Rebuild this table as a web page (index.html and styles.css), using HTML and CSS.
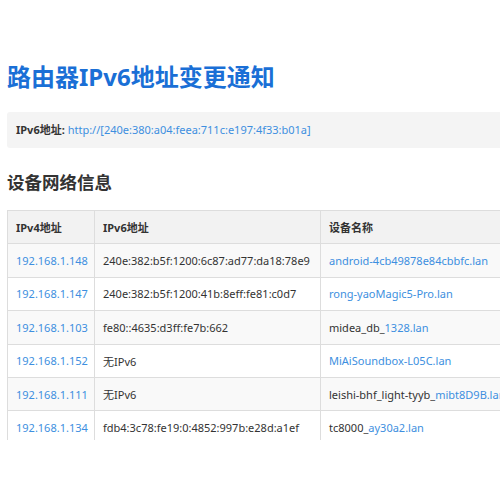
FILE: index.html
```html
<!DOCTYPE html>
<html lang="zh-CN">
<head>
<meta charset="utf-8">
<link rel="stylesheet" href="styles.css">
</head>
<body>
<div class="page">
    <h1 class="title">路由器IPv6地址变更通知</h1>
    <div class="addr_box">
        <b>IPv6地址:</b> <a href="#">http://[240e:380:a04:feea:711c:e197:4f33:b01a]</a>
    </div>
    <h2 class="sub_title">设备网络信息</h2>
    <table class="dev_table">
        <tr>
            <th class="c1">IPv4地址</th>
            <th class="c2">IPv6地址</th>
            <th class="c3">设备名称</th>
        </tr>
        <tr>
            <td><a href="#">192.168.1.148</a></td>
            <td>240e:382:b5f:1200:6c87:ad77:da18:78e9</td>
            <td><a href="#">android-4cb49878e84cbbfc.lan</a></td>
        </tr>
        <tr>
            <td><a href="#">192.168.1.147</a></td>
            <td>240e:382:b5f:1200:41b:8eff:fe81:c0d7</td>
            <td><a href="#">rong-yaoMagic5-Pro.lan</a></td>
        </tr>
        <tr>
            <td><a href="#">192.168.1.103</a></td>
            <td>fe80::4635:d3ff:fe7b:662</td>
            <td>midea_db_<a href="#">1328.lan</a></td>
        </tr>
        <tr>
            <td><a href="#">192.168.1.152</a></td>
            <td>无IPv6</td>
            <td><a href="#">MiAiSoundbox-L05C.lan</a></td>
        </tr>
        <tr>
            <td><a href="#">192.168.1.111</a></td>
            <td>无IPv6</td>
            <td>leishi-bhf_light-tyyb_<a href="#">mibt8D9B.lan</a></td>
        </tr>
        <tr>
            <td><a href="#">192.168.1.134</a></td>
            <td>fdb4:3c78:fe19:0:4852:997b:e28d:a1ef</td>
            <td>tc8000_<a href="#">ay30a2.lan</a></td>
        </tr>
    </table>
</div>
</body>
</html>
```
FILE: styles.css
```css
html, body {margin:0; padding:0; background:#fff; overflow:hidden;}
body {font-family:"Noto Sans", "Noto Sans CJK SC", sans-serif; color:#333; width:500px; height:500px;}
a {color:#3d8fe0; text-decoration:none;}

.page {height:440px; overflow:hidden; padding:0 0 0 7px;}
.title {margin:0; padding-top:61px; font-size:24px; line-height:32px; color:#1a6fd6; font-weight:bold;}
.addr_box {margin-top:19px; height:36px; line-height:36px; padding-left:9px; background:#f4f4f4; font-size:11px; width:600px; border-radius:3px;}
.addr_box b {color:#333;}
.sub_title {margin:22px 0 0; font-size:17.5px; line-height:24px; font-weight:bold; color:#333;}
.dev_table {margin-top:16px; border-collapse:collapse; font-size:11px; width:640px; table-layout:fixed;}
.dev_table th, .dev_table td {border:1px solid #ddd; padding:0 8px; height:32.4px; text-align:left; white-space:nowrap; overflow:hidden;}
.dev_table th {background:#f2f2f2; font-weight:bold;}
.dev_table tr:nth-child(even) td {background:#f9f9f9;}
.c1 {width:70px;}
.c2 {width:209px;}
```
